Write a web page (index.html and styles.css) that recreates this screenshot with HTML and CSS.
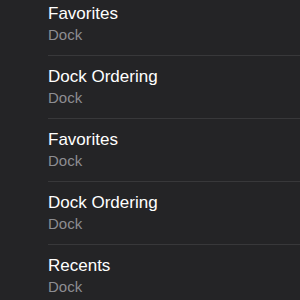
FILE: index.html
```html
<!DOCTYPE html>
<html>
<head>
<meta charset="utf-8">
<link rel="stylesheet" href="styles.css">
</head>
<body>
<ul class="list">
  <li class="row"><div class="title">Favorites</div><div class="subtitle">Dock</div></li>
  <li class="row"><div class="title">Dock Ordering</div><div class="subtitle">Dock</div></li>
  <li class="row"><div class="title">Favorites</div><div class="subtitle">Dock</div></li>
  <li class="row"><div class="title">Dock Ordering</div><div class="subtitle">Dock</div></li>
  <li class="row"><div class="title">Recents</div><div class="subtitle">Dock</div></li>
</ul>
</body>
</html>
```
FILE: styles.css
```css
html, body {
  margin: 0;
  padding: 0;
  background: #242426;
  height: 100%;
  overflow: hidden;
}
.list {
  list-style: none;
  margin: -7px 0 0 0;
  padding: 0 0 0 48px;
  font-family: "Liberation Sans", Arial, sans-serif;
}
.row {
  padding: 10px 0 10px 0;
  border-bottom: 1px solid #38383a;
}
.title {
  font-size: 17px;
  line-height: 22px;
  color: #ffffff;
}
.subtitle {
  font-size: 15px;
  line-height: 20px;
  color: #8d8d92;
}
```
